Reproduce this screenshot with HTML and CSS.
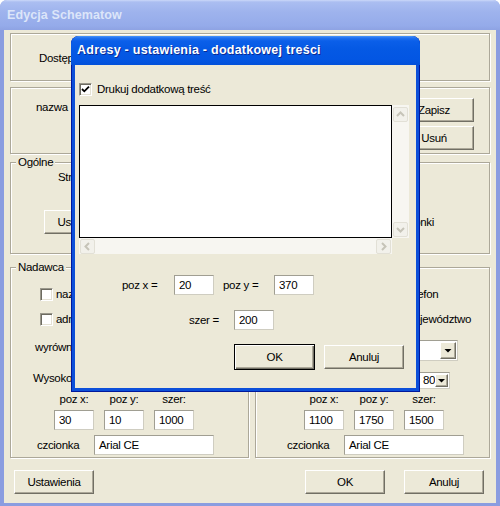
FILE: index.html
```html
<!DOCTYPE html>
<html lang="pl">
<head>
<meta charset="utf-8">
<title>Edycja Schematow</title>
<link rel="stylesheet" href="styles.css">
</head>
<body>
<div class="win">
  <div class="caption">Edycja Schematow</div>
  <div class="client">
    <div class="gb gb-access">
      <span class="lbl">Dostęp</span>
    </div>
    <div class="gb gb-name">
      <span class="lbl name-lbl">nazwa</span>
      <div class="btn-col">
        <div class="btn btn-side">Zapisz</div>
        <div class="btn btn-side">Usuń</div>
      </div>
    </div>
    <div class="gb gb-general">
      <span class="gb-title">Ogólne</span>
      <span class="lbl str-lbl">Strona</span>
      <div class="general-row">
        <div class="btn btn-gen">Ustawienia</div>
        <span class="lbl fonts-lbl">Czcionki</span>
      </div>
    </div>
    <div class="pair">
      <div class="gb gb-half gb-left">
        <span class="gb-title">Nadawca</span>
        <div class="chk-row chk-first"><span class="chk"></span><span>nazwa</span></div>
        <div class="chk-row chk-second"><span class="chk"></span><span>adres</span></div>
        <div class="row3"><span class="lbl">wyrównanie</span></div>
        <div class="row4"><span class="lbl">Wysokość czcionki</span></div>
        <div class="pos-grid">
          <span class="pos-lbl">poz x:</span><span class="pos-lbl">poz y:</span><span class="pos-lbl">szer:</span>
          <span class="inp">30</span><span class="inp">10</span><span class="inp">1000</span>
        </div>
        <div class="font-row"><span class="lbl">czcionka</span><span class="inp inp-font">Arial CE</span></div>
      </div>
      <div class="gb gb-half gb-right">
        <span class="gb-title">Odbiorca</span>
        <div class="chk-row chk-first"><span class="chk"></span><span>telefon</span></div>
        <div class="chk-row chk-second"><span class="chk"></span><span>województwo</span></div>
        <div class="row3">
          <div class="combo combo-wide"><span class="combo-val"></span><span class="combo-btn combo-btn-big"><svg width="14" height="15" viewBox="0 0 14 15"><polygon points="3.5,6 10.5,6 7,9.5" fill="#000"/></svg></span></div>
        </div>
        <div class="row4">
          <div class="combo combo-small"><span class="combo-val">80</span><span class="combo-btn combo-btn-small"><svg width="11" height="13" viewBox="0 0 11 13"><polygon points="2,5 9,5 5.5,8.5" fill="#000"/></svg></span></div>
        </div>
        <div class="pos-grid">
          <span class="pos-lbl">poz x:</span><span class="pos-lbl">poz y:</span><span class="pos-lbl">szer:</span>
          <span class="inp">1100</span><span class="inp">1750</span><span class="inp">1500</span>
        </div>
        <div class="font-row"><span class="lbl">czcionka</span><span class="inp inp-font">Arial CE</span></div>
      </div>
    </div>
    <div class="btnrow">
      <div class="btn">Ustawienia</div>
      <div class="btn btn-ok">OK</div>
      <div class="btn btn-cancel">Anuluj</div>
    </div>
  </div>

  <div class="dlg">
    <div class="dlg-title">Adresy - ustawienia - dodatkowej treści</div>
    <div class="dlg-client">
      <div class="dlg-chk-row">
        <span class="chk"><svg width="11" height="11" viewBox="0 0 11 11"><path d="M2 5 L4.3 7.3 L9 2.6" fill="none" stroke="#000" stroke-width="1.8"/></svg></span>
        <span>Drukuj dodatkową treść</span>
      </div>
      <div class="memo">
        <div class="memo-text"></div>
        <div class="vscroll">
          <span class="sbtn"><svg width="13" height="13" viewBox="0 0 13 13"><path d="M3 8 L6.5 4.5 L10 8" fill="none" stroke="#c6c4b8" stroke-width="2"/></svg></span>
          <span class="sbtn"><svg width="13" height="13" viewBox="0 0 13 13"><path d="M3 5 L6.5 8.5 L10 5" fill="none" stroke="#c6c4b8" stroke-width="2"/></svg></span>
        </div>
        <div class="hscroll">
          <span class="sbtn"><svg width="13" height="13" viewBox="0 0 13 13"><path d="M8 3 L4.5 6.5 L8 10" fill="none" stroke="#c6c4b8" stroke-width="2"/></svg></span>
          <span class="sbtn"><svg width="13" height="13" viewBox="0 0 13 13"><path d="M5 3 L8.5 6.5 L5 10" fill="none" stroke="#c6c4b8" stroke-width="2"/></svg></span>
        </div>
        <div class="memo-corner"></div>
      </div>
      <div class="dlg-pos-row">
        <span class="cell-a">poz x =</span><span class="inp">20</span>
        <span class="cell-b">poz y =</span><span class="inp">370</span>
      </div>
      <div class="dlg-szer-row">
        <span class="cell-c">szer =</span><span class="inp">200</span>
      </div>
      <div class="dlg-btn-row">
        <div class="btn btn-default">OK</div>
        <div class="btn">Anuluj</div>
      </div>
    </div>
  </div>
</div>
</body>
</html>
```

FILE: styles.css
```css
* { box-sizing: border-box; }

html, body {
  margin: 0;
  padding: 0;
  background: #fff;
}

body {
  font-family: "Liberation Sans", Arial, sans-serif;
  font-size: 11.5px;
  letter-spacing: -0.3px;
  line-height: 15px;
  color: #000;
}

.win {
  position: relative;
  width: 500px;
  height: 506px;
  background: #8a9de0;
  border-radius: 7px 7px 0 0;
  display: flex;
  flex-direction: column;
  overflow: hidden;
}

.caption {
  flex: none;
  height: 30px;
  padding-left: 7px;
  display: flex;
  align-items: center;
  background: linear-gradient(to bottom, #cbd8f8 0, #abbef1 2px, #9eb3ed 40%, #95abea 85%, #8ea3e3 100%);
  color: #dce5f9;
  font: bold 12.5px/1 "Liberation Sans", Arial, sans-serif;
  letter-spacing: 0.1px;
}

.client {
  flex: 1;
  margin: 0 4px 3px;
  background: #ece9d8;
  padding: 3px 6px 0;
  display: flex;
  flex-direction: column;
}

.gb {
  border: 1px solid #aca899;
  box-shadow: 1px 1px 0 #fff, inset 1px 1px 0 #fff;
  display: flex;
}

.gb-title {
  height: 15px;
  margin: -8px 0 0 5px;
  padding: 0 2px;
  background: #ece9d8;
}

/* box 1 */
.gb-access {
  height: 48px;
  padding: 17px 0 0 28px;
  align-items: flex-start;
}

/* box 2 */
.gb-name {
  margin-top: 6px;
  height: 67px;
  padding: 10px 15px 0 25px;
  justify-content: space-between;
  align-items: flex-start;
}
.name-lbl { margin-top: 2px; }
.btn-col {
  display: flex;
  flex-direction: column;
  gap: 4px;
}
.btn-side { width: 76px; height: 21px; }

/* box 3 */
.gb-general {
  margin-top: 8px;
  height: 92px;
  flex-direction: column;
  align-items: flex-start;
}
.str-lbl { margin-left: 47px; }
.general-row {
  margin: 25px 0 0 33px;
  display: flex;
  align-items: center;
}
.btn-gen { width: 80px; height: 22px; }
.fonts-lbl { margin-left: 269px; }

/* bottom pair of boxes */
.pair {
  margin-top: 13px;
  height: 191px;
  display: flex;
  gap: 6px;
}
.gb-half {
  flex-direction: column;
  align-items: flex-start;
}
.gb-left { width: 239px; }
.gb-right { width: 235px; }

.chk-row {
  display: flex;
  align-items: center;
  height: 13px;
  gap: 3px;
}
.chk-first { margin-top: 13px; }
.chk-second { margin-top: 12px; }

.row3 {
  margin-top: 14px;
  height: 21px;
  display: flex;
  align-self: stretch;
}
.row4 {
  margin-top: 11px;
  height: 17px;
  display: flex;
  align-self: stretch;
}

.pos-grid {
  margin-top: 3px;
  display: grid;
  grid-template-columns: repeat(3, 40px);
  grid-template-rows: 15px 20px;
  column-gap: 10px;
  row-gap: 3px;
}
.pos-lbl { justify-self: center; }

.font-row {
  margin-top: 5px;
  height: 20px;
  display: flex;
  align-items: center;
}
.font-row .lbl { width: 57px; }

.gb-left .chk-row { margin-left: 29px; }
.gb-left .row3 .lbl { margin-left: 24px; }
.gb-left .row4 .lbl { margin-left: 22px; margin-top: -1px; }
.gb-left .pos-grid { margin-left: 43px; }
.gb-left .font-row { margin-left: 26px; }

.gb-right .chk-row { margin-left: 132px; gap: 5px; }
.gb-right .row3 { justify-content: flex-end; padding-right: 31px; }
.gb-right .row4 { justify-content: flex-end; padding-right: 39px; }
.gb-right .pos-grid { margin-left: 48px; }
.gb-right .font-row { margin-left: 31px; }

/* checkbox */
.chk {
  width: 13px;
  height: 13px;
  flex: none;
  background: #fff;
  border: 1px solid;
  border-color: #9a988c #fff #fff #9a988c;
  box-shadow: inset 1px 1px 0 #6d6b61, inset -1px -1px 0 #e4e1d4;
  display: flex;
  align-items: center;
  justify-content: center;
}

/* input field */
.inp {
  display: block;
  width: 40px;
  height: 20px;
  background: #fff;
  border: 1px solid;
  border-color: #a09e92 #cfcdc1 #cfcdc1 #a09e92;
  padding-left: 4px;
  line-height: 18px;
  white-space: nowrap;
  overflow: hidden;
}
.inp.inp-font { width: 120px; }

/* combo */
.combo {
  display: flex;
  background: #fff;
  border: 1px solid;
  border-color: #a09e92 #cfcdc1 #cfcdc1 #a09e92;
  padding: 1px;
}
.combo-wide { width: 128px; height: 21px; }
.combo-small { width: 31px; height: 17px; }
.combo-val {
  flex: 1;
  padding-left: 2px;
  line-height: 13px;
}
.combo-btn {
  flex: none;
  background: #ece9d8;
  border: 1px solid;
  border-color: #fff #716f64 #716f64 #fff;
  box-shadow: inset -1px -1px 0 #aca899;
  display: flex;
  align-items: center;
  justify-content: center;
}
.combo-btn-big { width: 16px; }
.combo-btn-small { width: 13px; }

/* buttons */
.btn {
  width: 80px;
  height: 24px;
  flex: none;
  background: #ece9d8;
  border: 1px solid;
  border-color: #fff #716f64 #716f64 #fff;
  box-shadow: inset -1px -1px 0 #aca899;
  display: flex;
  align-items: center;
  justify-content: center;
  white-space: nowrap;
  overflow: hidden;
}

.btnrow {
  margin-top: 12px;
  height: 24px;
  display: flex;
  padding: 0 6px 0 4px;
}
.btn-ok { margin-left: auto; }
.btn-cancel { margin-left: 19px; }

/* dialog */
.dlg {
  position: absolute;
  left: 71px;
  top: 36px;
  width: 349px;
  height: 356px;
  background: #0c4fd9;
  border-radius: 8px 8px 0 0;
  box-shadow: inset 1px 0 0 #00189b, inset -1px 0 0 #00189b, inset 0 -1px 0 #00189b;
  display: flex;
  flex-direction: column;
}

.dlg-title {
  flex: none;
  height: 29px;
  padding-left: 6px;
  display: flex;
  align-items: center;
  border-radius: 8px 8px 0 0;
  background: linear-gradient(to bottom, #4a95f8 0, #1f70f0 2px, #0b5fe9 5px, #0559e4 45%, #0356e3 80%, #0250d9 100%);
  color: #fff;
  font: bold 12.5px/1 "Liberation Sans", Arial, sans-serif;
  letter-spacing: 0.25px;
  text-shadow: 1px 1px 0 #0b2a93;
}

.dlg-client {
  flex: 1;
  margin: 0 4px 4px;
  background: #ece9d8;
  padding: 18px 0 0 4px;
  display: flex;
  flex-direction: column;
  align-items: flex-start;
}

.dlg-chk-row {
  display: flex;
  align-items: center;
  gap: 5px;
  height: 13px;
}

.memo {
  margin-top: 9px;
  display: grid;
  grid-template-columns: 313px 17px;
  grid-template-rows: 133px 16px;
}
.memo-text {
  background: #fff;
  border: 1px solid #000;
}
.vscroll {
  background: #f7f6f1;
  display: flex;
  flex-direction: column;
  justify-content: space-between;
  align-items: center;
  padding: 2px 0 1px;
}
.hscroll {
  background: #f7f6f1;
  display: flex;
  justify-content: space-between;
  align-items: center;
  padding: 0 1px;
}
.memo-corner { background: #ece9d8; }

.sbtn {
  width: 15px;
  height: 15px;
  border: 1px solid #e2e0d6;
  border-radius: 2px;
  background: #f2f1eb;
  display: flex;
  align-items: center;
  justify-content: center;
}

.dlg-pos-row {
  margin-top: 21px;
  height: 20px;
  display: flex;
  align-items: center;
  padding-left: 43px;
}
.cell-a { width: 52px; }
.cell-b { width: 51px; margin-left: 9px; }

.dlg-szer-row {
  margin-top: 15px;
  height: 20px;
  display: flex;
  align-items: center;
  padding-left: 110px;
}
.cell-c { width: 45px; }

.dlg-btn-row {
  margin-top: 14px;
  align-self: stretch;
  height: 26px;
  display: flex;
  justify-content: flex-end;
  align-items: center;
  gap: 9px;
  padding-right: 12px;
}
.btn-default {
  width: 81px;
  height: 26px;
  border: 1px solid #000;
  box-shadow: inset 1px 1px 0 #fff, inset -1px -1px 0 #716f64, inset -2px -2px 0 #aca899;
}
```
